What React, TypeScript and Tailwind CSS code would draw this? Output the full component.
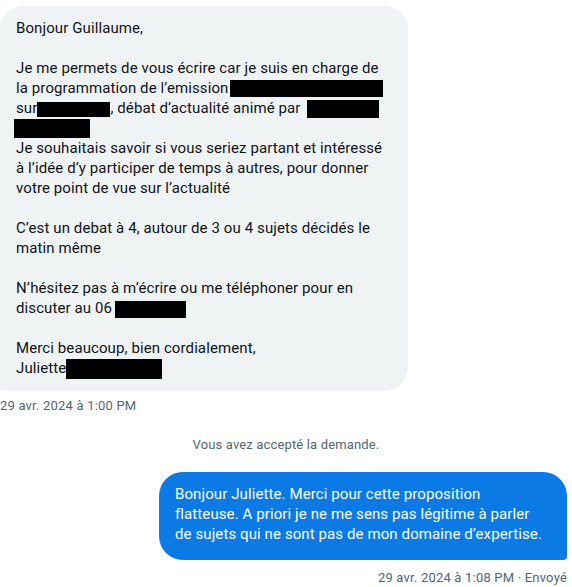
import React from "react";

const Redact = ({ w, h, className = "" }: { w: string; h: string; className?: string }) => (
  <span className={`inline-block bg-black align-middle ${w} ${h} ${className}`} />
);

const App = () => {
  return (
    <div
      className="w-[572px] h-[587px] bg-white overflow-hidden pt-[6px] pr-[5px] text-[#0f1419]"
      style={{ fontFamily: "Roboto, 'Noto Sans', sans-serif" }}
    >
      {/* Received message */}
      <div className="flex flex-col items-start">
        <div className="w-[408px] bg-[#eff3f4] rounded-[24px] rounded-bl-[4px] px-4 py-3 text-[15px] leading-5 tracking-[0.1px] whitespace-nowrap">
          <p>Bonjour Guillaume,</p>
          <p className="h-5" />
          <p>Je me permets de vous écrire car je suis en charge de</p>
          <p>
            la programmation de l’emission
            <Redact w="w-[153px]" h="h-[17px]" className="-mt-[2px] ml-[2px]" />
          </p>
          <p>
            sur
            <Redact w="w-[73px]" h="h-[15px]" />, débat d’actualité animé par{" "}
            <Redact w="w-[72px]" h="h-[18px]" className="ml-[3px]" />
          </p>
          <p className="h-5 flex items-center">
            <span className="block w-[76px] h-[19px] bg-black -ml-[2px]" />
          </p>
          <p>Je souhaitais savoir si vous seriez partant et intéressé</p>
          <p>à l’idée d’y participer de temps à autres, pour donner</p>
          <p>votre point de vue sur l’actualité</p>
          <p className="h-5" />
          <p>C’est un debat à 4, autour de 3 ou 4 sujets décidés le</p>
          <p>matin même</p>
          <p className="h-5" />
          <p>N’hésitez pas à m’écrire ou me téléphoner pour en</p>
          <p>
            discuter au 06
            <Redact w="w-[71px]" h="h-[17px]" className="ml-[3px]" />
          </p>
          <p className="h-5" />
          <p>Merci beaucoup, bien cordialement,</p>
          <p>
            Juliette
            <Redact w="w-[96px]" h="h-[20px]" />
          </p>
        </div>
        <div className="mt-[7px] text-[13px] leading-4 tracking-[0.2px] text-[#536471]">29 avr. 2024 à 1:00 PM</div>
      </div>

      {/* System notice */}
      <div className="mt-[23px] text-center text-[13px] leading-4 tracking-[0.15px] text-[#536471] pl-[5px]">
        Vous avez accepté la demande.
      </div>

      {/* Sent message */}
      <div className="mt-[19px] flex flex-col items-end">
        <div className="w-[408px] bg-[#0b7ae4] text-white rounded-[24px] rounded-br-[4px] px-4 pt-3 pb-4 text-[15px] leading-5 tracking-[0.1px] whitespace-nowrap">
          <p>Bonjour Juliette. Merci pour cette proposition</p>
          <p>flatteuse. A priori je ne me sens pas légitime à parler</p>
          <p>de sujets qui ne sont pas de mon domaine d’expertise.</p>
        </div>
        <div className="mt-[10px] text-[13px] leading-4 tracking-[0.2px] text-[#536471]">29 avr. 2024 à 1:08 PM · Envoyé</div>
      </div>
    </div>
  );
};

export default App;
